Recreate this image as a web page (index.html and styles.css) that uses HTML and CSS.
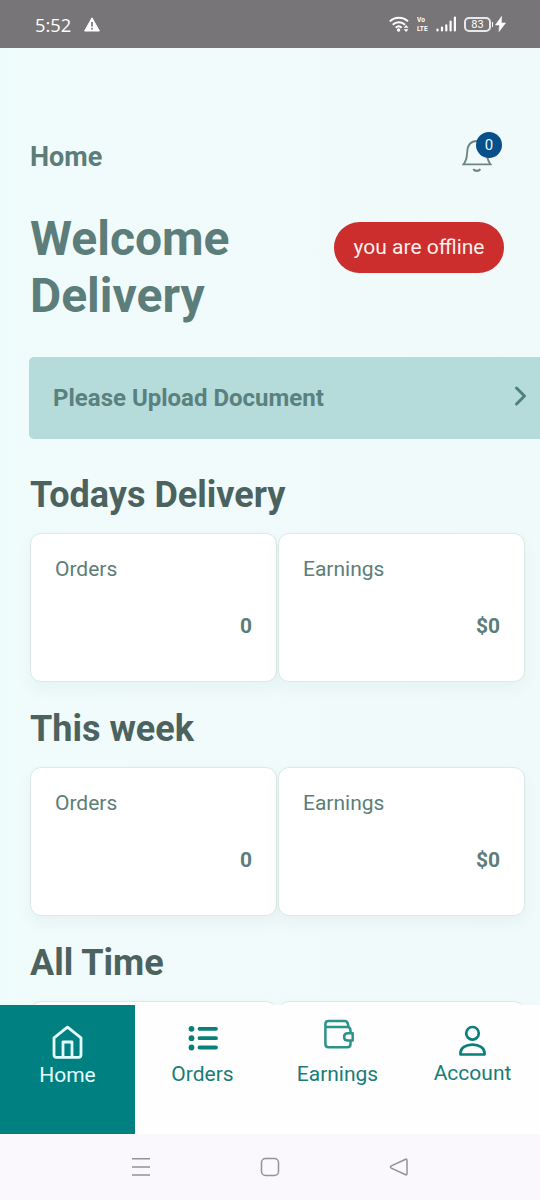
FILE: index.html
```html
<!DOCTYPE html>
<html lang="en">
<head>
<meta charset="utf-8">
<meta name="viewport" content="width=device-width">
<title>Home</title>
<link rel="stylesheet" href="styles.css">
</head>
<body>
<div class="phone">
  <div class="status">
    <span class="clock">5:52</span>
    <svg class="warn" width="16" height="15" viewBox="0 0 16 15"><path d="M8 .8 15.400 14H.6z" fill="#fff" stroke="#fff" stroke-width="1" stroke-linejoin="round"/><path d="M8 5v4.400M8 10.700v1.800" stroke="#777578" stroke-width="1.700"/></svg>
    <div class="signals">
      <svg width="20" height="17" viewBox="0 0 20 17" fill="none" stroke="#fff" stroke-width="2"><path d="M.8 5.400c5-4.900 13.200-4.900 18.200 0M3.700 8.700c3.500-3.300 8.800-3.300 12.300 0M6.700 11.700c2-1.800 4.200-1.800 6 0"/><circle cx="9.600" cy="14" r="1.700" fill="#fff" stroke="none"/><path d="m14.700 11.800 2.400-2.800 2.400 2.800zM14.700 13.200l2.400 2.800 2.400-2.800z" fill="#fff" stroke="none"/></svg>
      <span class="volte"><b>Vo</b><b>LTE</b></span>
      <svg width="20" height="16" viewBox="0 0 20 16" fill="none" stroke="#fff" stroke-width="2.200" stroke-linecap="round"><path d="M1.500 14.500v-.8M6 14.500v-3M10.300 14.500V9.300M14.600 14.500V5.500M18.900 14.500V1.500"/></svg>
      <span class="battery">83</span>
      <svg class="bolt" width="11" height="16" viewBox="0 0 11 16"><path d="M6.600.5.500 9h4L4 15.500 10.500 7H6.300z" fill="#fff" stroke="#fff" stroke-width=".6"/></svg>
    </div>
  </div>

  <main class="content">
    <header class="topbar">
      <h3 class="page-name">Home</h3>
      <div class="bell">
        <svg width="30" height="34" viewBox="0 0 30 34" fill="none" stroke="#6f8582" stroke-width="1.800"><path d="M1.500 25.300c3.200-4.200 3.400-7 3.700-12.300C5.500 6 9 2 15 2s9.500 4 9.800 11c.3 5.300.5 8.100 3.700 12.300z"/><path d="M11.300 30.100c1.700 2.400 5.300 2.400 7 0" stroke-width="2.200"/></svg>
        <span class="badge">0</span>
      </div>
    </header>

    <div class="welcome">
      <h1>Welcome<br>Delivery</h1>
      <span class="offline">you are offline</span>
    </div>

    <div class="upload">
      <span>Please Upload Document</span>
      <svg width="14" height="22" viewBox="0 0 14 22"><path d="m2.500 3 8 8-8 8" fill="none" stroke="#4f807d" stroke-width="3" stroke-linecap="round" stroke-linejoin="round"/></svg>
    </div>

    <section class="stats">
      <h2>Todays Delivery</h2>
      <div class="cards">
        <div class="card"><span>Orders</span><strong>0</strong></div>
        <div class="card"><span>Earnings</span><strong>$0</strong></div>
      </div>
    </section>
    <section class="stats">
      <h2>This week</h2>
      <div class="cards">
        <div class="card"><span>Orders</span><strong>0</strong></div>
        <div class="card"><span>Earnings</span><strong>$0</strong></div>
      </div>
    </section>
    <section class="stats">
      <h2>All Time</h2>
      <div class="cards">
        <div class="card"></div>
        <div class="card"></div>
      </div>
    </section>
  </main>

  <nav class="tabs">
    <a class="tab active">
      <svg class="icon" width="32" height="36" viewBox="0 0 32 36" fill="none" stroke="#e4ffff" stroke-width="2.800" stroke-linejoin="round"><path d="M2 13.800 15.500 3.200 29 13.800v17q0 2.600-2.600 2.600H4.600q-2.600 0-2.600-2.600z"/><path d="M11 33V18h9v15"/></svg>
      <span>Home</span>
    </a>
    <a class="tab">
      <svg class="icon" width="32" height="36" viewBox="0 0 32 36" fill="none" stroke="#087f78" stroke-width="3.800" stroke-linecap="round"><path d="M12.500 4.800h16.500M12.500 14.200h16.500M12.500 23.500h16.500"/><g fill="#087f78" stroke="none"><circle cx="4.500" cy="4.800" r="2.900"/><circle cx="4.500" cy="14.200" r="2.900"/><circle cx="4.500" cy="23.500" r="2.900"/></g></svg>
      <span>Orders</span>
    </a>
    <a class="tab">
      <svg class="icon wallet" width="32" height="36" viewBox="0 0 32 36" fill="none" stroke="#2b9388" stroke-width="2.500" stroke-linejoin="round"><path d="M3.400 9V6q0-3 3-3h16.300q2.200 0 2.900 2l1 3.800M3.400 9h21.800q3.300 0 3.300 3.500v2.500M28.500 22v4q0 3.300-3.300 3.300H6.500q-3.100 0-3.100-3.300V9"/><path d="M30.700 15.300h-4.900q-3.700 0-3.700 3.600t3.700 3.600h4.900z"/></svg>
      <span>Earnings</span>
    </a>
    <a class="tab">
      <svg class="icon" width="32" height="36" viewBox="0 0 32 36" fill="none" stroke="#087f78" stroke-width="2.700" stroke-linejoin="round"><circle cx="15.500" cy="9.300" r="6.300"/><path d="M3.500 30.500v-1.500c0-5 5.300-8.300 12-8.300s12 3.300 12 8.300v1.500z"/></svg>
      <span class="raised">Account</span>
    </a>
  </nav>

  <div class="system">
    <svg width="20" height="20" viewBox="0 0 20 20" stroke="#949197" stroke-width="1.500"><path d="M1 1.800h18M1 10h18M1 18h18"/></svg>
    <svg width="20" height="20" viewBox="0 0 20 20" fill="none" stroke="#949197" stroke-width="1.500"><rect x="1.500" y="1.500" width="17" height="17" rx="4"/></svg>
    <svg width="20" height="20" viewBox="0 0 20 20" fill="none" stroke="#949197" stroke-width="1.500" stroke-linejoin="round"><path d="M16.700 2.200 2.300 8.900q-1.700 1.100 0 2.200l14.400 6.700q1.300.4 1.300-1V3.200q0-1.400-1.300-1z"/></svg>
  </div>
</div>
</body>
</html>
```
FILE: styles.css
```css
* { box-sizing: border-box; }
body { margin: 0; font-family: Roboto, sans-serif; color: #5c7d79; }
h1, h2, h3 { margin: 0; font-weight: 700; }
svg { display: block; flex: none; }

.phone { display: flex; flex-direction: column; width: 540px; height: 1200px; overflow: hidden; }

.status { display: flex; align-items: center; height: 48px; padding: 0 34px 0 35px; background: #777578; color: #fff; flex: none; }
.clock { font: 400 18.300px "Open Sans", sans-serif; }
.warn { margin-left: 13px; }
.signals { display: flex; align-items: center; margin-left: auto; }
.volte { display: grid; margin: 0 7px 0 8px; width: 12px; font-size: 7.500px; line-height: 9px; transform: scaleX(.88); transform-origin: left; }
.battery { position: relative; width: 27px; height: 15px; margin-left: 8px; border: 2px solid #e8e7e9; border-radius: 5px; font-size: 11px; line-height: 12px; text-align: center; }
.battery::after { content: ""; position: absolute; right: -4px; top: 3px; width: 1.500px; height: 5px; background: #fff; }
.bolt { margin-left: 4px; }

.content { height: 957px; flex: none; overflow: hidden; padding: 86px 0 0 30px; background: linear-gradient(90deg, #eefdfb 0, #f0fbfb 8%, #f0fafb 100%); }

.topbar { display: flex; justify-content: space-between; align-items: center; height: 46px; padding-right: 48px; }
.page-name { font-size: 27px; }
.bell { position: relative; margin-top: -3px; }
.badge { position: absolute; left: 14px; top: -7px; width: 26px; height: 26px; border-radius: 50%; background: #07508a; color: #e6fbff; font-size: 15px; line-height: 26px; text-align: center; }

.welcome { display: flex; justify-content: space-between; align-items: flex-start; margin-top: 30px; padding-right: 36px; }
h1 { font-size: 48px; line-height: 57px; }
.offline { width: 170px; height: 51px; margin-top: 12px; border-radius: 26px; background: #cc2d2d; color: #fff0ed; font-size: 21px; line-height: 50px; text-align: center; }

.upload { display: flex; align-items: center; justify-content: space-between; height: 82px; margin: 33px 0 0 -1px; padding: 0 12px 0 24px; border-radius: 5px 0 0 5px; background: #b5dbdb; color: #59817f; font-size: 24px; font-weight: 700; }
.upload svg { margin-top: -4px; }

.stats { height: 234px; }
.upload + .stats { margin-top: 34px; }
.stats h2 { height: 60px; padding-top: 1px; color: #4c625f; font-size: 36px; line-height: 43px; }
.cards { display: grid; grid-template-columns: 247px 247px; gap: 1px; }
.card { display: flex; flex-direction: column; justify-content: space-between; height: 149px; padding: 22px 24px 42px 24px; border: 1px solid #dce9e7; border-radius: 11px; background: #fff; box-shadow: 0 7px 16px rgba(40, 90, 80, .05); font-size: 21px; line-height: 26px; }
.card strong { align-self: flex-end; }

.tabs { display: grid; grid-template-columns: repeat(4, 1fr); height: 129px; flex: none; background: #fefeff; color: #177d76; font-size: 21px; }
.tab { display: flex; flex-direction: column; align-items: center; padding-top: 19px; line-height: 26px; }
.tab .icon { margin-bottom: 1px; }
.tab .wallet { margin-top: -6px; margin-bottom: 7px; }
.tab .raised { margin-top: -1px; }
.tab.active { background: #008080; color: #e4ffff; }
.tab.active span { margin-top: 1px; }

.system { display: flex; justify-content: space-between; align-items: center; height: 66px; flex: none; padding: 0 131px; background: #faf8fc; }
```
